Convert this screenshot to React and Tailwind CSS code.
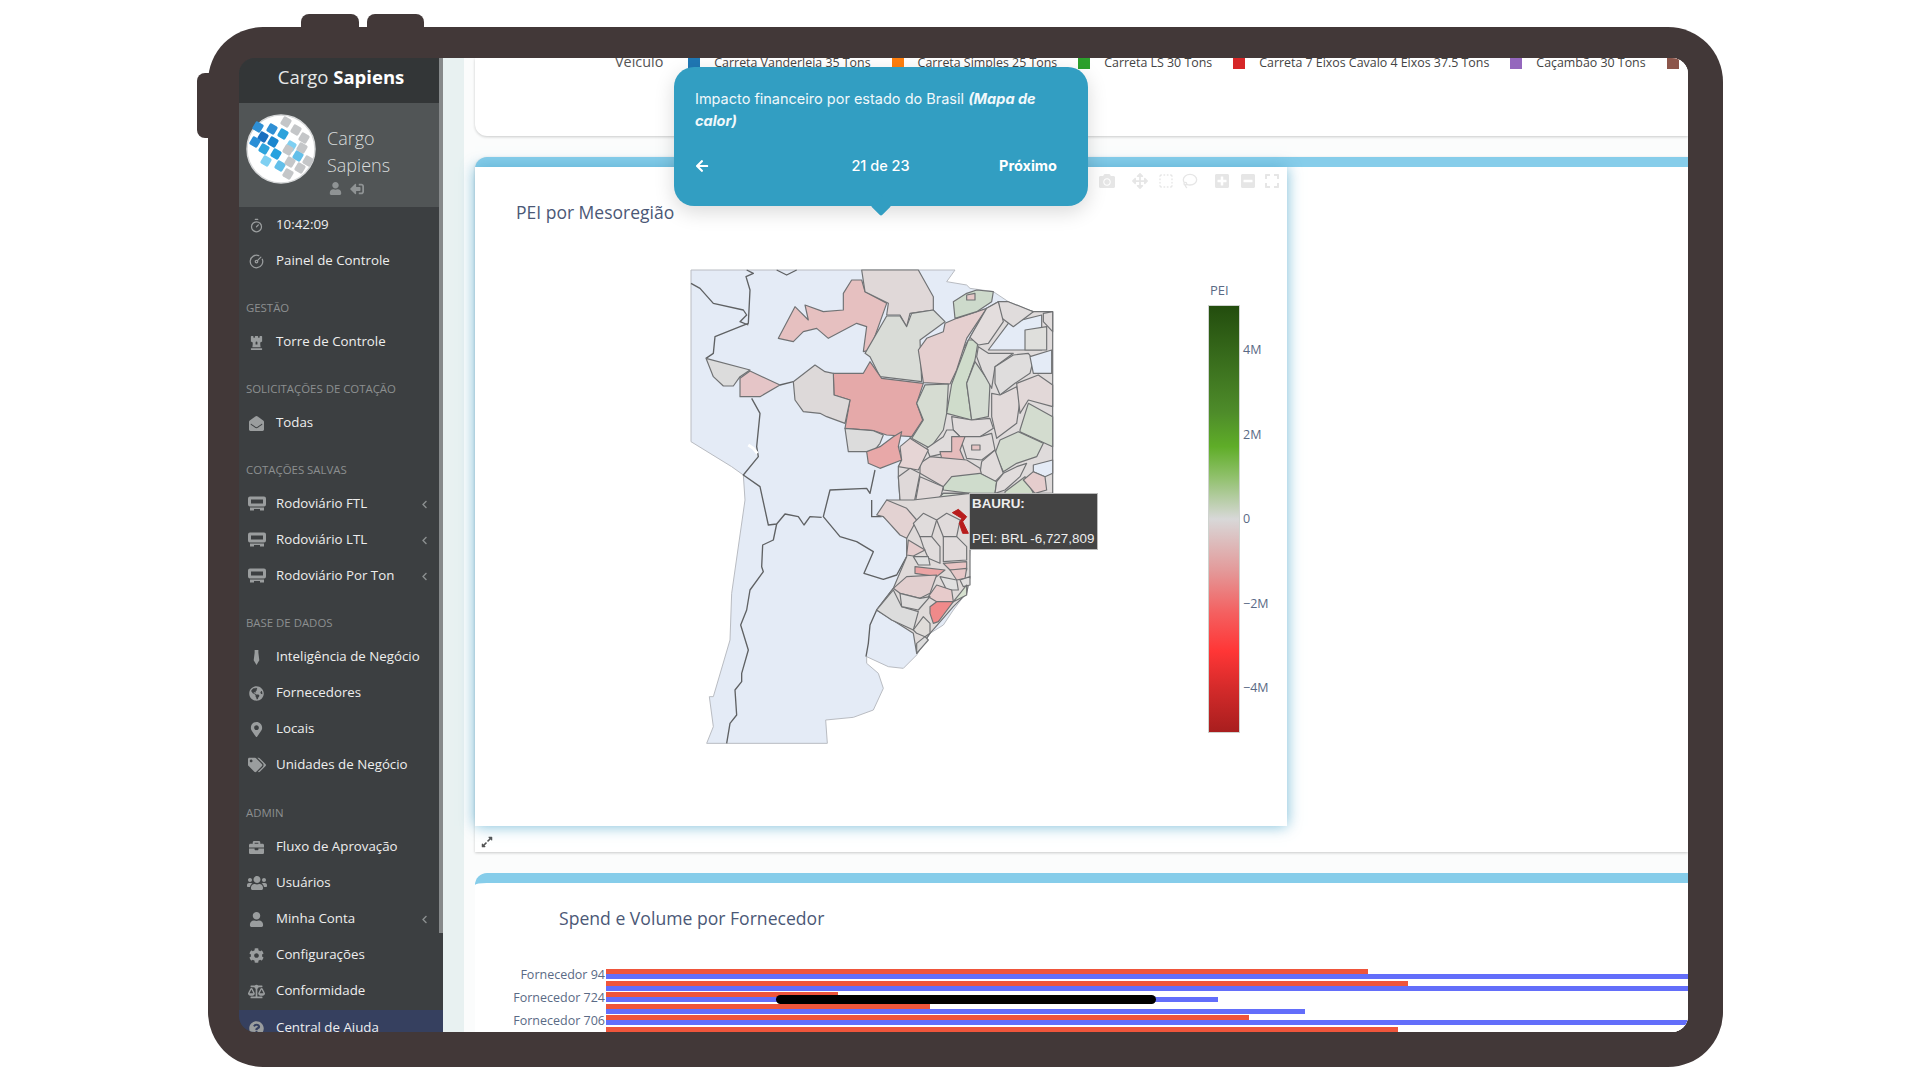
import React from 'react';
import {
  FaChessRook, FaEnvelopeOpen, FaGlobeAmericas, FaMapMarkerAlt, FaTags,
  FaBriefcase, FaUsers, FaUser, FaCog, FaBalanceScale, FaQuestionCircle, FaSignOutAlt, FaChevronLeft,
  FaArrowLeft, FaCamera, FaArrowsAlt, FaPlusSquare, FaMinusSquare, FaExpand, FaExpandAlt,
} from 'react-icons/fa';
import { LuLasso } from 'react-icons/lu';
import { Timer, CircleGauge, SquareDashed } from 'lucide-react';

const font = { fontFamily: '"Open Sans", sans-serif' };

const Tie = ({ size }) => (
  <svg viewBox="0 0 10 16" width={size} height={size} fill="currentColor">
    <path d="M3 0h4v3L8 11l-3 5-3-5 1-8z" />
  </svg>
);

const Truck = ({ size }) => (
  <svg viewBox="0 0 20 15" width={size} height={size} fill="currentColor" fillRule="evenodd">
    <path d="M3 0h14a2 2 0 0 1 2 2v6a2 2 0 0 1-2 2H3a2 2 0 0 1-2-2V2a2 2 0 0 1 2-2zM4 3v4h12V3z" />
    <path d="M3 11h4v3H3zM13 11h4v3h-4zM7 11h6v1.5H7z" />
  </svg>
);

const Item = ({ icon: Icon, label, chevron, size = 15 }) => (
  <div className="flex items-center h-9 pl-[3px] pr-[14px]">
    <span className="w-[29px] flex justify-center text-[#9a9d9e] shrink-0"><Icon size={size} /></span>
    <span className="ml-[5px] text-[13.3px] text-[#eeeeee] flex-1 whitespace-nowrap">{label}</span>
    {chevron && <FaChevronLeft size={9} className="text-[#8b8e8f]" />}
  </div>
);

const Label = ({ children, className = 'h-[45px]' }) => (
  <div className={`${className} flex items-end pb-2 pl-[7px] text-[11.4px] leading-4 text-[#8c8f90] whitespace-nowrap`}>{children}</div>
);

const Avatar = () => {
  const blue = [[17, 23, '#1a6fc0'], [26, 15, '#2f8fd4'], [12, 13, '#2f8fd4'], [27, 28, '#1b86cf'], [37, 20, '#2ea3dc'], [9, 28, '#2a8ed6'], [18, 35, '#2ea3dc'], [30, 40, '#27a2df'], [45, 32, '#7fd0f2'], [20, 47, '#7fd0f2'], [34, 52, '#63bfe9'], [52, 42, '#63bfe9']];
  const grey = [[40, 8, '#c4c6c8'], [50, 16, '#c4c6c8'], [58, 24, '#c4c6c8'], [42, 36, '#c4c6c8'], [56, 34, '#c4c6c8'], [44, 48, '#c4c6c8'], [54, 54, '#c4c6c8'], [42, 60, '#c4c6c8'], [62, 47, '#c4c6c8']];
  return (
    <svg viewBox="0 0 70 70" className="w-[70px] h-[70px] shrink-0 -mt-[12px]">
      <circle cx="35" cy="35" r="34" fill="#fff" stroke="#d5d7d8" strokeWidth="1.5" />
      {[...blue, ...grey].map(([x, y, c], i) => (
        <rect key={i} x={x - 4.5} y={y - 4.5} width="9" height="9" rx="1.5" fill={c} transform={`rotate(30 ${x} ${y})`} />
      ))}
    </svg>
  );
};

const Sidebar = () => (
  <aside className="relative w-[204px] h-full shrink-0 bg-[#3c3f41] overflow-hidden" style={font}>
    <div className="h-[45px] bg-[#333637] flex items-center justify-center pb-[7px] text-[18.5px] text-[#e6e8e8]">
      Cargo&nbsp;<b className="text-white font-bold">Sapiens</b>
    </div>
    <div className="h-[104px] bg-[#515556] flex items-center pl-[7px]">
      <Avatar />
      <div className="ml-[11px] mt-[10px] text-[18px] leading-[27px] text-[#d8dcdc] font-light">
        <div>Cargo</div>
        <div>Sapiens</div>
        <div className="flex items-center gap-[8px] text-[#8f9394] ml-[2px] mt-[3px] h-[14px]">
          <FaUser size={13} /><FaSignOutAlt size={14} className="rotate-180" />
        </div>
      </div>
    </div>
    <Item icon={Timer} label="10:42:09" />
    <Item icon={CircleGauge} label="Painel de Controle" />
    <Label>GESTÃO</Label>
    <Item icon={FaChessRook} label="Torre de Controle" />
    <Label>SOLICITAÇÕES DE COTAÇÃO</Label>
    <Item icon={FaEnvelopeOpen} label="Todas" />
    <Label>COTAÇÕES SALVAS</Label>
    <Item icon={Truck} label="Rodoviário FTL" chevron size={20} />
    <Item icon={Truck} label="Rodoviário LTL" chevron size={20} />
    <Item icon={Truck} label="Rodoviário Por Ton" chevron size={20} />
    <Label>BASE DE DADOS</Label>
    <Item icon={Tie} label="Inteligência de Negócio" />
    <Item icon={FaGlobeAmericas} label="Fornecedores" />
    <Item icon={FaMapMarkerAlt} label="Locais" />
    <Item icon={FaTags} label="Unidades de Negócio" size={18} />
    <Label className="h-[46px]">ADMIN</Label>
    <Item icon={FaBriefcase} label="Fluxo de Aprovação" />
    <Item icon={FaUsers} label="Usuários" size={20} />
    <Item icon={FaUser} label="Minha Conta" chevron />
    <Item icon={FaCog} label="Configurações" />
    <Item icon={FaBalanceScale} label="Conformidade" size={17} />
    <div className="bg-[#36405f] mt-px"><Item icon={FaQuestionCircle} label="Central de Ajuda" /></div>
    <div className="absolute right-0 top-0 w-1 h-[875px] bg-[#86898a]" />
  </aside>
);

// map shapes are traced in 3x zoom units, the svg viewBox scales them back down
const regions = [
  // base of the eastern part, the pale holes sit on top of it
  ['790,372 870,232 920,145 955,125 1060,155 1118,155 1118,700 870,700 790,700 700,740 660,720 655,650 655,620 665,600 690,535 735,375', '#dfdbdb'],
  ['925,270 985,190 1085,165 1085,270', '#e4ebf6'],
  ['1060,615 1118,600 1118,640 1095,650 1060,635', '#e4ebf6'],
  ['295,235 345,140 385,180 375,135 430,155 490,150 490,100 515,60 545,60 555,95 620,130 570,270 550,275 560,200 530,190 445,235 410,205 370,215 340,245', '#e6c0c0'],
  ['545,30 715,30 760,110 760,150 690,160 680,200 660,165 620,165 625,130 555,95', '#e0d8d8'],
  ['620,168 660,168 680,200 695,160 760,150 795,185 720,240 725,365 600,350 570,290 555,280', '#d9dcd7'],
  ['795,190 830,175 920,145 860,235 830,330 810,372 730,368 715,270 740,235 790,215', '#e5cfcf'],
  ['820,125 860,100 890,90 940,95 935,125 890,155 825,175', '#cddacb'],
  ['860,105 885,100 885,120 860,120', '#e5c8c8'],
  ['460,340 550,340 570,305 605,355 730,370 710,430 728,480 695,530 620,525 580,512 495,505 510,420 462,405', '#e5a9a9'],
  ['78,295 210,330 180,350 160,378 130,378 100,350', '#dcdcdc'],
  ['210,333 300,375 240,410 180,410 180,355', '#e5c5c7'],
  ['340,365 405,315 435,335 460,340 462,405 510,420 495,490 440,470 420,460 370,455 345,420', '#ddd9d9'],
  ['495,505 580,512 610,525 600,550 580,575 505,575', '#dcdcdc'],
  ['560,575 600,560 640,530 665,515 655,560 665,600 600,625 565,610', '#e8a8a8'],
  ['735,375 805,372 800,460 790,510 750,565 695,535 730,480 710,430', '#d6dcd2'],
  ['815,372 865,240 895,240 885,300 860,370 875,480 800,460', '#cfdccb'],
  ['885,305 930,370 925,470 875,480 860,370', '#d4dcd2'],
  ['895,260 925,280 1000,280 945,320 935,385 905,330 890,290', '#dfdcdc'],
  ['945,320 1000,285 1045,280 1060,300 1050,340 1005,370 960,405 945,370', '#dfdddd'],
  ['935,400 960,405 1010,380 1020,420 1010,490 950,535 935,470', '#e2dada'],
  ['1010,370 1075,345 1118,375 1118,440 1045,420 1020,460', '#e2d8d8'],
  ['1020,510 1045,430 1118,470 1118,560 1085,545 1020,515', '#d3dccf'],
  ['945,580 960,540 1015,515 1090,550 1070,590 1010,610 970,635', '#d3dbcf'],
  ['955,125 985,125 1060,155 1000,200 960,170', '#e0dcdc'],
  ['1090,160 1118,155 1118,215 1090,185', '#e0dcdc'],
  ['1035,210 1100,200 1100,270 1035,270', '#dfdfdc'],
  ['1050,290 1115,270 1115,340 1060,340', '#e4ebf6'],
  ['920,145 955,125 970,185 925,250 895,255 870,232', '#e3dddd'],
  ['815,470 875,480 930,475 940,505 900,530 840,530 820,510', '#e1dcdc'],
  ['800,510 820,510 840,530 815,575 750,590 740,565 790,530', '#e0dcdc'],
  ['840,530 900,530 935,520 945,570 905,600 860,595', '#e1dcdc'],
  ['815,530 855,530 840,570 855,605 785,595 780,575 815,575', '#e6bcbc'],
  ['875,555 900,555 900,570 875,570', '#e5c4c4'],
  ['905,605 945,570 970,640 945,665 900,640', '#e1dcdc'],
  ['720,610 750,590 860,600 900,625 905,645 810,680 790,680 720,640', '#e1d5d5'],
  ['665,600 660,560 690,535 745,570 715,630 655,620', '#e6d5d5'],
  ['655,650 690,625 720,640 700,740 660,720', '#dfd9d9'],
  ['720,650 790,680 780,720 735,780 700,760', '#e1d9d9'],
  ['790,680 815,650 900,640 950,665 945,700 870,700 790,690', '#cfdccc'],
  ['770,720 790,700 870,700 870,745 820,750 800,750', '#d6ddd3'],
  ['950,665 970,640 1010,620 1040,610 1020,650 975,690 945,700', '#e1dcdc'],
  ['975,695 1035,650 1060,700 975,710', '#d0dcc9'],
  ['1030,660 1060,635 1095,650 1100,690 1065,700', '#e5cdcd'],
  // south of the cut, y is shifted by 720
  ['700,720 870,700 870,870 870,950 860,1000 820,1040 750,1120 710,1180 700,1120 590,1050 640,985 680,890 680,830 610,770 620,720', '#dfdad9'],
  ['590,765 620,720 680,745 710,780 680,835 660,825 610,770', '#e3d2d2'],
  ['700,790 730,760 770,780 755,830 720,830', '#e0dcdc'],
  ['770,780 800,760 840,780 830,830 790,830', '#e0dbdb'],
  ['720,830 755,830 780,860 780,910 745,895 730,860', '#e0dcdc'],
  ['790,830 830,830 860,860 860,900 790,905', '#e1dcdc'],
  ['685,840 735,870 700,888 680,885', '#e5cccc'],
  ['700,890 745,890 750,915 715,915', '#dfdfdf'],
  ['705,920 795,930 770,950 705,940', '#eba4a4'],
  ['790,910 860,905 860,930 810,930', '#e9c4c4'],
  ['810,930 860,925 855,955 830,960', '#e6c7c7'],
  ['780,950 830,960 835,990 800,990', '#e0e0e0'],
  ['840,960 870,950 870,975 850,980', '#e0dede'],
  ['640,985 680,950 770,945 750,1000 720,1015 660,1000', '#e2cfcf'],
  ['745,1010 770,975 815,990 820,1025 770,1025', '#e7cbcb'],
  ['840,1000 860,975 860,1005 820,1025', '#d7e2d0'],
  ['590,1050 640,990 665,1040 715,1055 700,1110 635,1080', '#dcdcdc'],
  ['660,1000 720,1015 750,1010 715,1050 665,1040', '#dedcdc'],
  ['750,1040 770,1025 820,1025 790,1065 775,1085 760,1090 750,1060', '#f08a8a'],
  ['700,1110 730,1070 750,1090 750,1120 735,1130 710,1120', '#dfdcd9'],
  ['710,1150 735,1130 745,1140 710,1180', '#dcdcdc'],
];

const lines = [
  '200,30 220,40 198,50 210,90 205,190 180,200 105,230 100,280 78,295',
  '33,70 60,85 100,130 190,150 200,165 180,185 205,195',
  '290,30 320,45 350,30',
  '215,415 240,460 230,560 235,590 190,645 240,680 265,795 290,792 315,762 355,770 372,795 390,770 425,772',
  '585,630 570,700 560,685 450,690 430,770 480,830 530,845 580,875 552,940 610,958 650,945 680,890',
  '290,792 280,840 248,855 245,920 250,935 210,990 200,1050 182,1095 205,1170 185,1240 185,1265 165,1290 170,1365 150,1390 140,1450',
  '575,720 575,770 605,770',
  '640,985 590,1050 570,1095 565,1150 558,1190',
  '590,1050 620,1065 635,1080',
  '300,375 340,365',
];

const Map = () => (
  <svg viewBox="0 0 1380 1500" className="w-[460px] h-[500px] shrink-0">
    <polygon
      points="33,30 825,30 800,65 860,75 870,85 940,95 985,125 1060,155 1118,155 1118,800 870,870 865,955 850,1010 820,1050 790,1095 750,1120 710,1185 670,1225 625,1220 560,1190 560,1210 595,1240 610,1285 580,1350 520,1372 437,1380 442,1450 80,1450 100,1400 88,1310 100,1310 150,1140 155,1000 195,720 190,645 155,620 33,545"
      fill="#e4ebf6" stroke="#b9bcc2" strokeWidth="3" strokeLinejoin="round"
    />
    {lines.map((p, i) => (
      <polyline key={i} points={p} fill="none" stroke="#5f6163" strokeWidth="4" strokeLinejoin="round" />
    ))}
    {regions.map(([p, c], i) => (
      <polygon key={i} points={p} fill={c} stroke="#707274" strokeWidth="3.5" strokeLinejoin="round" />
    ))}
    <polygon points="817,758 835,748 860,770 848,785 865,820 848,820 838,790 845,775" fill="#b81c1c" stroke="#b81c1c" strokeWidth="3" />
    <polyline points="205,555 220,565 232,580" fill="none" stroke="#fff" strokeWidth="9" />
  </svg>
);

const ColorBar = () => (
  <div className="ml-[68px] pt-[22px] text-[12.5px] leading-4 text-[#5a6a85]">
    <div className="pl-[2px] mb-[7px] text-[13px]">PEI</div>
    <div className="flex">
      <div className="w-8 h-[428px] border border-[#cfd3cf] bg-[linear-gradient(to_bottom,#234d0e_0%,#4e8c2a_25%,#5fad28_33%,#8fc06a_40%,#d8d8d8_50%,#e39a9a_62%,#f46060_72%,#ff3636_81%,#d32a2a_90%,#a81e1e_100%)]" />
      <div className="pl-[3px] pt-[37px]">
        {['4M', '2M', '0', '−2M', '−4M'].map((t) => (
          <div key={t} className="h-[84.5px]">{t}</div>
        ))}
      </div>
    </div>
  </div>
);

const Modebar = () => (
  <div className="absolute top-[6px] right-[7px] flex items-center text-[#e6e6e6]">
    <FaCamera size={16} />
    <FaArrowsAlt size={16} className="ml-[17px]" />
    <SquareDashed size={16} className="ml-[10px]" />
    <LuLasso size={16} className="ml-[8px]" />
    <FaPlusSquare size={16} className="ml-[16px]" />
    <FaMinusSquare size={16} className="ml-[10px]" />
    <FaExpand size={16} className="ml-[8px]" />
  </div>
);

const legend = [
  ['Carreta Vanderleia 35 Tons', '#1f77b4'],
  ['Carreta Simples 25 Tons', '#ff7f0e'],
  ['Carreta LS 30 Tons', '#2ca02c'],
  ['Carreta 7 Eixos Cavalo 4 Eixos 37.5 Tons', '#d62728'],
  ['Caçambão 30 Tons', '#9467bd'],
  ['', '#8c564b'],
];

const bars = [
  { label: 'Fornecedor 94', red: 762, blue: 1100 },
  { label: '', red: 802, blue: 1100 },
  { label: 'Fornecedor 724', red: 232, blue: 612 },
  { label: '', red: 324, blue: 699 },
  { label: 'Fornecedor 706', red: 643, blue: 1100 },
  { label: '', red: 792, blue: 0 },
];

const Popup = () => (
  <div className="absolute left-[231px] top-[9px] w-[414px] h-[139px] rounded-[20px] bg-[#329ec2] pl-[21px] pr-[22px] pt-[21px] text-white shadow-[0_6px_20px_rgba(0,0,0,0.15)]" style={{ fontFamily: 'Inter, sans-serif' }}>
    <div className="text-[14.5px] leading-[22px] text-[#f0f8fb]">
      Impacto financeiro por estado do Brasil <b className="italic font-bold">(Mapa de calor)</b>
    </div>
    <div className="grid grid-cols-[1fr_auto_1fr] items-center h-6 mt-[22px] text-[14.5px]">
      <FaArrowLeft size={14} />
      <span className="font-medium">21 de 23</span>
      <span className="justify-self-end mr-[9px] font-bold">Próximo</span>
    </div>
    <div className="absolute left-1/2 -translate-x-1/2 -bottom-[7px] w-[15px] h-[15px] rotate-45 bg-[#329ec2] rounded-[2px]" />
  </div>
);

const Content = () => (
  <main className="relative flex-1 min-w-0 h-full bg-[#e8f1f1] pl-[21px] overflow-hidden" style={font}>
    <div className="h-full bg-[#fbfcfc] pl-[11px]">
      <div className="h-[78px] bg-white rounded-bl-xl shadow-[0_1px_3px_rgba(0,0,0,0.2)] pl-[140px] flex items-start text-[12.4px] text-[#444]">
        <span className="-mt-1 text-[14.4px] leading-4 text-[#555]">Veículo</span>
        <div className="flex items-start -mt-[3px] ml-[25px] gap-[21px] whitespace-nowrap">
          {legend.map(([name, color]) => (
            <div key={color} className="flex items-start">
              <span className="w-3 h-[14px] shrink-0" style={{ background: color }} />
              {name && <span className="ml-[14px] leading-4">{name}</span>}
            </div>
          ))}
        </div>
      </div>

      <section className="mt-[21px] h-[695px] bg-white rounded-tl-xl shadow-[0_1px_3px_rgba(0,0,0,0.2)] border-t-10 border-[#86cdea]">
        <div className="relative w-[812px] h-[659px] bg-white shadow-[0_0_14px_rgba(85,170,205,0.8)] pt-[33px]">
          <Modebar />
          <div className="pl-[41px] text-[17.5px] leading-6 text-[#4b5876]">PEI por Mesoregião</div>
          <div className="flex mt-[36px] pl-[205px]">
            <Map />
            <ColorBar />
          </div>
          <div className="absolute left-[494px] top-[326px] w-[129px] h-[57px] bg-[#444] border border-[#bbb] pl-[2px] text-[13.4px] leading-4 text-[#eee]" style={{ fontFamily: '"Liberation Sans", sans-serif' }}>
            <div className="pt-[2px] font-bold">BAURU:</div>
            <div className="pt-[19px] whitespace-nowrap">PEI: BRL -6,727,809</div>
          </div>
        </div>
        <div className="pl-[6px] pt-[10px] text-[#555]"><FaExpandAlt size={12} /></div>
      </section>

      <section className="relative mt-[21px] h-[200px] bg-white rounded-tl-xl border-t-10 border-[#86cdea]">
        <div className="pt-[23px] pb-px pl-[84px] text-[17.6px] leading-6 text-[#4b5876]">Spend e Volume por Fornecedor</div>
        <div className="mt-[38px]">
          {bars.map((b, i) => (
            <div key={i} className="flex h-[11.6px]">
              <div className="w-[131px] shrink-0 pr-px text-right text-[12.5px] leading-[11px] text-[#5a6a85] whitespace-nowrap">{b.label}</div>
              <div className="flex-1">
                <div className="h-[5px] bg-[#ef553b]" style={{ width: b.red }} />
                <div className="h-[5px] bg-[#636efa]" style={{ width: b.blue }} />
              </div>
            </div>
          ))}
        </div>
        <div className="absolute left-[301px] top-[112px] w-[380px] h-[9px] rounded-full bg-black" />
      </section>
    </div>
    <Popup />
  </main>
);

export default function App() {
  return (
    <div className="w-[1920px] h-[1080px] bg-white pt-[27px] pl-[208px] overflow-hidden">
      <div className="relative w-[1515px] h-[1040px] bg-[#423838] rounded-[55px] pl-[31px] pr-[35px] pt-[31px] pb-[35px]">
        <div className="absolute left-[93px] -top-[13px] w-[58px] h-[20px] rounded-t-lg bg-[#423838]" />
        <div className="absolute left-[159px] -top-[13px] w-[57px] h-[20px] rounded-t-lg bg-[#423838]" />
        <div className="absolute -left-[11px] top-[46px] w-[20px] h-[65px] rounded-l-lg bg-[#423838]" />
        <div className="flex h-full rounded-[16px] overflow-hidden">
          <Sidebar />
          <Content />
        </div>
      </div>
    </div>
  );
}
